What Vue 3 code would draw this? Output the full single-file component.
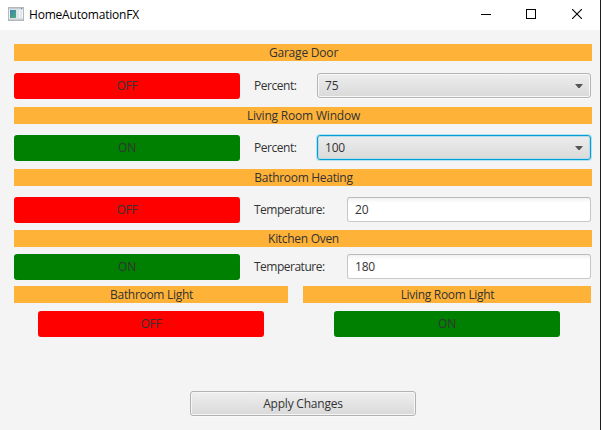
<script setup>
import { ref } from 'vue'

const devices = ref([
  { name: 'Garage Door', on: false, label: 'Percent:', value: '75', kind: 'combo' },
  { name: 'Living Room Window', on: true, label: 'Percent:', value: '100', kind: 'combo', focused: true },
  { name: 'Bathroom Heating', on: false, label: 'Temperature:', value: '20', kind: 'field' },
  { name: 'Kitchen Oven', on: true, label: 'Temperature:', value: '180', kind: 'field' },
])
const lights = ref([
  { name: 'Bathroom Light', on: false },
  { name: 'Living Room Light', on: true },
])
</script>

<template>
  <div class="window">
    <header class="titlebar">
      <svg class="app-icon" width="16" height="14" viewBox="0 0 16 14">
        <defs>
          <linearGradient id="pane" x1="0" y1="0" x2="1" y2="1">
            <stop offset="0" stop-color="#3f7fb4" />
            <stop offset="1" stop-color="#4fae74" />
          </linearGradient>
        </defs>
        <rect x="0.5" y="0.5" width="15" height="13" fill="#f4f5f6" stroke="#b3b8be" />
        <rect x="1" y="1" width="14" height="1.5" fill="#c5cbd3" />
        <rect x="2" y="3" width="6" height="8" fill="url(#pane)" />
        <rect x="8" y="3" width="3" height="8" fill="#dfe6ea" />
        <rect x="12" y="3" width="2" height="8" fill="#e4e7e9" />
        <rect x="13" y="1" width="1" height="1" fill="#4f9a8c" />
        <rect x="1" y="11.5" width="14" height="1.5" fill="#c9cdd2" />
      </svg>
      <h1 class="title">HomeAutomationFX</h1>
      <div class="controls">
        <svg class="minimize" width="10" height="10" viewBox="0 0 10 10" shape-rendering="crispEdges"><path d="M0 5.5H10" stroke="#000" /></svg>
        <svg width="10" height="10" viewBox="0 0 10 10"><rect x="0.5" y="0.5" width="9" height="9" fill="none" stroke="#000" /></svg>
        <svg width="10" height="10" viewBox="0 0 10 10"><path d="M0 0L10 10M10 0L0 10" stroke="#000" stroke-width="1.1" /></svg>
      </div>
    </header>

    <main class="content">
      <section v-for="d in devices" :key="d.name" class="device" :class="d.kind">
        <h2 class="heading"><span>{{ d.name }}</span></h2>
        <div class="row">
          <button class="toggle" :class="{ on: d.on }" @click="d.on = !d.on">{{ d.on ? 'ON' : 'OFF' }}</button>
          <span class="label">{{ d.label }}</span>
          <div v-if="d.kind === 'combo'" class="select" :class="{ focused: d.focused }">
            <span>{{ d.value }}</span>
            <svg width="8" height="4" viewBox="0 0 8 4"><path d="M0 0H8L4.6 4H3.4Z" fill="#555" /></svg>
          </div>
          <input v-else v-model="d.value" class="input" type="text" />
        </div>
      </section>

      <div class="lights">
        <section v-for="l in lights" :key="l.name" class="light">
          <h2 class="heading"><span>{{ l.name }}</span></h2>
          <button class="toggle" :class="{ on: l.on }" @click="l.on = !l.on">{{ l.on ? 'ON' : 'OFF' }}</button>
        </section>
      </div>

      <button class="apply">Apply Changes</button>
    </main>
  </div>
</template>

<style>
body {
  margin: 0;
}
</style>

<style scoped>
.window {
  box-sizing: border-box;
  width: 601px;
  height: 430px;
  overflow: hidden;
  background: #f4f4f4;
  border-right: 1px solid #1e1e1e;
  font-family: "Open Sans", "Noto Sans", sans-serif;
  font-size: 12px;
  letter-spacing: -0.2px;
  color: #333;
}
.titlebar {
  display: flex;
  align-items: center;
  box-sizing: border-box;
  height: 30px;
  padding: 0 18px 2px 8px;
  background: #fff;
}
.title {
  flex: 1;
  margin: 0 0 0 5px;
  padding-top: 2px;
  font-size: 12px;
  font-weight: 400;
  line-height: 16px;
  color: #000;
}
.controls {
  display: flex;
  gap: 36px;
}
.minimize {
  margin-right: -1px;
}
.content {
  display: flex;
  flex-direction: column;
  padding: 14px 8px 0 14px;
}
.heading {
  height: 17px;
  margin: 0;
  padding-left: 1px;
  background: #ffb238;
  font-size: 12px;
  font-weight: 400;
  line-height: 18px;
  text-align: center;
}
.field .heading,
.light .heading {
  letter-spacing: -0.3px;
}
.row {
  display: flex;
  align-items: flex-start;
  height: 26px;
  padding-right: 1px;
}
.combo .row {
  margin: 12px 0 8px;
}
.combo + .combo .row {
  margin-top: 11px;
}
.field .row {
  margin: 11px 0 7px;
}
.field + .field .row {
  margin: 7px 0 6px;
}
.toggle,
.apply {
  display: block;
  width: 226px;
  height: 26px;
  padding: 0;
  border: 0;
  border-radius: 3px;
  background: #f00;
  color: #333;
  font: inherit;
  letter-spacing: inherit;
  line-height: 26px;
  text-align: center;
}
.toggle.on {
  background: #008000;
}
.label {
  margin-left: 14px;
  line-height: 26px;
  letter-spacing: -0.45px;
}
.combo .label {
  width: 63px;
}
.field .label {
  width: 93px;
  letter-spacing: -0.5px;
}
.select,
.input {
  flex: 1;
  min-width: 0;
  box-sizing: border-box;
  height: 25px;
  border: 1px solid #b5b5b5;
  border-radius: 3px;
  padding: 0 7px;
}
.select {
  display: flex;
  align-items: center;
  justify-content: space-between;
  background: linear-gradient(#ededed, #dadada);
  box-shadow: inset 0 0 0 1px #f7f7f7, 0 1px 0 #fafafa;
}
.select.focused {
  border-color: #039ed3;
  box-shadow: inset 0 0 0 1px #b5dbe8, 0 0 0 1px #b5e0ee;
}
.input {
  outline: 0;
  border-color: #b9b9b9 #c6c6c6 #c9c9c9;
  background: linear-gradient(#f1f1f1, #fff 5px);
  color: #333;
  font: inherit;
  letter-spacing: inherit;
}
.lights {
  display: grid;
  grid-template-columns: 274px 288px;
  gap: 15px;
}
.light .toggle {
  margin: 8px 0 0 24px;
}
.light + .light .toggle {
  margin-left: 31px;
}
.apply {
  box-sizing: border-box;
  height: 25px;
  margin: 54px 0 0 176px;
  border: 1px solid #b2b2b2;
  background: linear-gradient(#efefef, #d9d9d9);
  box-shadow: inset 0 0 0 1px #f6f6f6, 0 1px 0 #fafafa;
  line-height: 24px;
}
</style>
